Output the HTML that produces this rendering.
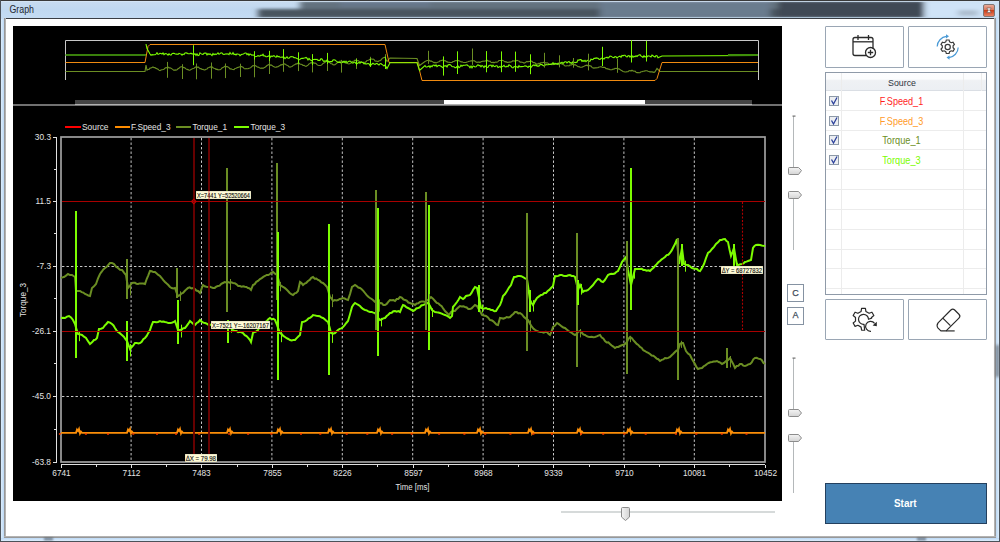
<!DOCTYPE html>
<html><head><meta charset="utf-8">
<style>
html,body{margin:0;padding:0;}
body{width:1000px;height:542px;position:relative;overflow:hidden;background:#fff;font-family:"Liberation Sans",sans-serif;}
.abs{position:absolute;}
#frame{left:0;top:0;width:1000px;height:542px;background:#bcd6f0;}
#title{left:0;top:0;width:1000px;height:19px;overflow:hidden;}
#client{left:6px;top:19px;width:988px;height:517px;background:#fff;}
.btn{position:absolute;box-sizing:border-box;border:1px solid #9aa6b4;border-radius:1px;background:#fff;}
.cb{position:absolute;left:829px;width:10px;height:10px;box-sizing:border-box;border:1px solid #8d99a8;background:linear-gradient(#e6e9ee,#f6f7f9);}
.row{position:absolute;left:842px;width:121px;text-align:center;font-size:10px;}
</style></head><body>
<div id="frame" class="abs"></div>
<div id="title" class="abs">
  <svg width="1000" height="19" style="position:absolute;left:0;top:0">
    <defs>
      <filter id="bl" x="-10%" y="-50%" width="120%" height="200%"><feGaussianBlur stdDeviation="3 1.5"/></filter>
      <linearGradient id="tg" x1="0" y1="0" x2="0" y2="1">
        <stop offset="0" stop-color="#c9dcf0"/><stop offset="0.5" stop-color="#c0d8f0"/><stop offset="1" stop-color="#c4dcf4"/>
      </linearGradient>
    </defs>
    <rect x="0" y="0" width="1000" height="19" fill="url(#tg)"/>
    <g filter="url(#bl)">
      <rect x="300" y="1" width="480" height="9" fill="#63727f"/>
      <rect x="258" y="9" width="520" height="9" fill="#49545f"/>
      <rect x="600" y="1" width="170" height="16" fill="#6a7b8e"/>
      <rect x="778" y="1" width="146" height="17" fill="#3f4954"/>
      <rect x="340" y="1" width="90" height="6" fill="#66778a"/>
      <rect x="925" y="1" width="75" height="17" fill="#cfe3f7"/>
      <rect x="958" y="10" width="20" height="6" fill="#aebfd0"/>
    </g>
    <rect x="0" y="0" width="1000" height="1" fill="#3a3a3a"/>
    <rect x="1" y="1" width="998" height="1" fill="#d6e6f6" opacity="0.8"/>
    <rect x="0" y="17" width="1000" height="1" fill="#c6dcf0" opacity="0.7"/>
    <rect x="4" y="18" width="992" height="1" fill="#3a3e44"/>
    <rect x="0" y="0" width="1" height="19" fill="#4c5259"/>
    <rect x="999" y="0" width="1" height="19" fill="#4c5259"/>
    <text x="9.5" y="12.8" font-family="Liberation Sans" font-size="10" fill="#1e2630" textLength="24.5" lengthAdjust="spacingAndGlyphs">Graph</text>
    <!-- close button -->
    <defs><linearGradient id="cg" x1="0" y1="0" x2="0" y2="1">
      <stop offset="0" stop-color="#eab0a0"/><stop offset="0.45" stop-color="#d9775c"/><stop offset="0.5" stop-color="#c8401c"/><stop offset="1" stop-color="#ec8466"/></linearGradient></defs>
    <rect x="983.5" y="4.5" width="11" height="12" rx="1.5" fill="url(#cg)" stroke="#7f7776"/>
    <path d="M986.8,8 L991.2,8 L989.6,10.2 L991.2,12.5 L986.8,12.5 L988.4,10.2 Z" fill="#f4f0f0" stroke="#5a4a48" stroke-width="0.5"/>
  </svg>
</div>
<!-- window frame sides -->
<div class="abs" style="left:0;top:19px;width:1px;height:523px;background:#4c5259"></div>
<div class="abs" style="left:1px;top:19px;width:3px;height:520px;background:linear-gradient(90deg,#dcedfc,#bcd8f4)"></div>
<div class="abs" style="left:4px;top:18px;width:2px;height:520px;background:linear-gradient(90deg,#8a8a8a,#c0c0c0)"></div>
<div class="abs" style="left:999px;top:19px;width:1px;height:523px;background:#4c5259"></div>
<div class="abs" style="left:996px;top:19px;width:3px;height:520px;background:linear-gradient(90deg,#bcd8f4,#dcedfc)"></div>
<div class="abs" style="left:994px;top:18px;width:2px;height:520px;background:linear-gradient(90deg,#c0c0c0,#8a8a8a)"></div>
<div class="abs" style="left:0;top:541px;width:1000px;height:1px;background:#4c5259"></div>
<div class="abs" style="left:1px;top:538px;width:998px;height:3px;background:linear-gradient(#bcd8f4,#dcedfc)"></div>
<div class="abs" style="left:4px;top:536px;width:992px;height:2px;background:linear-gradient(#c0c0c0,#8a8a8a)"></div>
<div id="client" class="abs"></div>
<div class="abs" style="left:996px;top:345px;width:3px;height:32px;background:#555c66;filter:blur(1.5px);opacity:0.8"></div>
<div class="abs" style="left:44px;top:538px;width:9px;height:2px;background:#3a4450;filter:blur(1px);opacity:0.8"></div>
<div class="abs" style="left:917px;top:538px;width:9px;height:2px;background:#3a4450;filter:blur(1px);opacity:0.8"></div>

<!-- chart panel -->
<svg class="abs" style="left:0;top:0" width="1000" height="542" font-family="Liberation Sans">
  <rect x="13" y="26" width="769" height="475" fill="#000"/>
  <!-- mini chart -->
  <path d="M65.5,80 V40.5 H758.5 V80" fill="none" stroke="#c8c8c8" stroke-width="1"/>
  <polyline points="65.5,71.5 145,71.5 146,65.0 147.0,70.1 148.0,69.5 149.0,69.4 150.0,68.1 151.0,68.0 152.0,67.5 153.0,67.0 154.0,67.6 155.0,67.5 156.0,68.4 157.0,68.7 158.0,69.3 159.0,70.1 160.0,70.7 161.0,69.9 162.0,69.7 163.0,69.5 164.0,69.2 165.0,68.2 166.0,67.5 167.0,67.8 168.0,66.9 169.0,67.9 170.0,67.8 171.0,68.3 172.0,68.9 173.0,69.6 174.0,70.4 175.0,69.9 176.0,70.1 177.0,69.7 178.0,68.8 179.0,68.3 180.0,67.2 181.0,66.8 182.0,66.8 183.0,67.4 184.0,67.6 185.0,68.0 186.0,68.9 187.0,69.4 188.0,69.6 189.0,70.3 190.0,70.2 191.0,69.4 192.0,69.1 193.0,68.4 194.0,68.2 195.0,67.5 196.0,66.8 197.0,67.5 198.0,66.9 199.0,67.7 200.0,68.6 201.0,68.6 202.0,69.5 203.0,69.4 204.0,70.0 205.0,69.9 206.0,69.3 207.0,69.0 208.0,67.8 209.0,67.6 210.0,67.1 211.0,66.9 212.0,66.9 213.0,67.7 214.0,68.3 215.0,68.5 216.0,69.3 217.0,69.1 218.0,69.9 219.0,69.8 220.0,69.8 221.0,69.1 222.0,67.9 223.0,67.4 224.0,67.1 225.0,66.2 226.0,66.6 227.0,66.6 228.0,67.0 229.0,67.6 230.0,68.9 231.0,68.8 232.0,69.3 233.0,69.5 234.0,69.7 235.0,68.5 236.0,68.2 237.0,67.7 238.0,67.4 239.0,67.0 240.0,66.9 241.0,66.4 242.0,66.8 243.0,67.3 244.0,68.4 245.0,69.0 246.0,68.6 247.0,68.8 248.0,68.7 249.0,68.3 250.0,68.0 251.0,67.4 252.0,66.4 253.0,65.6 254.0,65.7 255.0,65.6 256.0,66.0 257.0,66.8 258.0,67.1 259.0,67.5 260.0,68.1 261.0,68.5 262.0,67.9 263.0,68.4 264.0,67.8 265.0,67.3 266.0,66.5 267.0,65.5 268.0,65.0 269.0,64.5 270.0,65.1 271.0,64.9 272.0,65.4 273.0,66.2 274.0,66.7 275.0,67.2 276.0,67.1 277.0,66.9 278.0,66.7 279.0,66.0 280.0,65.6 281.0,64.6 282.0,64.9 283.0,64.3 284.0,63.8 285.0,64.1 286.0,64.7 287.0,65.2 288.0,65.6 289.0,66.8 290.0,67.2 291.0,66.7 292.0,66.5 293.0,65.6 294.0,64.9 295.0,64.5 296.0,63.8 297.0,63.9 298.0,63.0 299.0,63.0 300.0,64.2 301.0,64.3 302.0,64.5 303.0,65.5 304.0,65.3 305.0,66.0 306.0,66.3 307.0,65.8 308.0,65.1 309.0,63.9 310.0,63.4 311.0,62.6 312.0,62.9 313.0,62.6 314.0,63.1 315.0,63.1 316.0,63.5 317.0,64.7 318.0,65.3 319.0,65.5 320.0,65.5 321.0,65.2 322.0,64.6 323.0,63.5 324.0,63.1 325.0,62.3 326.0,61.5 327.0,61.3 328.0,61.7 329.0,62.0 330.0,62.9 331.0,63.8 332.0,63.8 333.0,64.7 334.0,64.9 335.0,64.7 336.0,63.8 337.0,63.0 338.0,62.3 339.0,61.6 340.0,61.1 341.0,61.2 342.0,61.4 343.0,61.6 344.0,61.6 345.0,62.4 346.0,63.1 347.0,62.9 348.0,63.7 349.0,64.0 350.0,63.6 351.0,63.1 352.0,62.2 353.0,61.2 354.0,61.1 355.0,60.2 356.0,60.5 357.0,60.8 358.0,60.5 359.0,61.1 360.0,62.2 361.0,62.5 362.0,62.3 363.0,62.3 364.0,62.2 365.0,62.5 366.0,61.8 367.0,60.4 368.0,60.3 369.0,59.9 370.0,59.2 371.0,58.8 372.0,59.2 373.0,59.1 374.0,59.5 375.0,61.0 376.0,61.1 377.0,61.2 378.0,61.6 379.0,60.8 380.0,60.7 381.0,60.0 382.0,58.6 383.0,58.0 384.0,57.5 385.0,57.2 387,61.5 390,58.0 417,58.5 419.5,65.5 425,61.5 426.0,61.1 427.0,60.5 428.0,60.4 429.0,60.2 430.0,61.1 431.0,60.9 432.0,61.4 433.0,62.0 434.0,62.6 435.0,62.4 436.0,62.9 437.0,62.4 438.0,62.1 439.0,61.7 440.0,60.8 441.0,60.8 442.0,60.3 443.0,60.0 444.0,60.9 445.0,60.5 446.0,61.2 447.0,61.9 448.0,62.1 449.0,62.2 450.0,62.5 451.0,62.5 452.0,62.5 453.0,61.5 454.0,61.5 455.0,60.8 456.0,60.5 457.0,60.8 458.0,60.5 459.0,60.8 460.0,61.3 461.0,61.9 462.0,61.8 463.0,62.3 464.0,62.5 465.0,62.5 466.0,62.5 467.0,62.0 468.0,61.7 469.0,61.2 470.0,61.3 471.0,60.8 472.0,60.9 473.0,61.0 474.0,60.6 475.0,61.3 476.0,62.1 477.0,62.4 478.0,62.0 479.0,62.1 480.0,62.4 481.0,61.8 482.0,61.6 483.0,61.0 484.0,61.2 485.0,61.0 486.0,60.9 487.0,60.2 488.0,60.9 489.0,61.2 490.0,61.1 491.0,62.3 492.0,62.7 493.0,62.2 494.0,62.9 495.0,62.3 496.0,62.0 497.0,62.2 498.0,61.6 499.0,60.5 500.0,60.5 501.0,60.5 502.0,60.4 503.0,60.5 504.0,61.1 505.0,61.9 506.0,61.6 507.0,62.4 508.0,62.4 509.0,62.0 510.0,62.1 511.0,62.0 512.0,61.5 513.0,60.6 514.0,61.2 515.0,60.8 516.0,61.0 517.0,60.3 518.0,60.8 519.0,61.0 520.0,62.1 521.0,62.1 522.0,62.2 523.0,62.6 524.0,63.1 525.0,62.8 526.0,61.9 527.0,61.4 528.0,61.9 529.0,61.3 530.0,61.5 531.0,61.0 532.0,61.3 533.0,62.4 534.0,62.6 535.0,62.8 536.0,64.0 537.0,63.9 538.0,64.1 539.0,63.2 540.0,63.7 541.0,62.6 542.0,63.0 543.0,62.4 544.0,62.2 545.0,62.5 546.0,63.1 547.0,62.8 548.0,63.2 549.0,64.1 550.0,64.2 551.0,64.4 552.0,64.6 553.0,64.4 554.0,64.3 555.0,64.1 556.0,63.7 557.0,63.9 558.0,63.2 559.0,63.4 560.0,63.3 561.0,63.8 562.0,63.9 563.0,64.6 564.0,64.9 565.0,66.0 566.0,66.0 567.0,65.7 568.0,65.8 569.0,66.0 570.0,64.8 571.0,65.2 572.0,64.5 573.0,64.5 574.0,64.9 575.0,64.7 576.0,65.2 577.0,65.9 578.0,66.7 579.0,66.5 580.0,67.3 581.0,67.3 582.0,67.1 583.0,66.7 584.0,66.3 585.0,65.7 586.0,65.4 587.0,65.2 588.0,65.8 589.0,65.5 590.0,65.8 591.0,66.1 592.0,67.4 593.0,67.9 594.0,68.1 595.0,67.9 596.0,67.9 597.0,67.8 598.0,67.7 599.0,67.0 600.0,67.0 601.0,66.6 602.0,67.3 603.0,67.4 604.0,67.3 605.0,67.4 606.0,68.7 607.0,68.6 608.0,69.1 609.0,69.1 610.0,69.7 611.0,69.8 612.0,69.7 613.0,69.1 614.0,69.1 615.0,68.4 616.0,68.5 617.0,68.4 618.0,68.9 619.0,68.9 620.0,69.4 621.0,70.3 622.0,70.7 623.0,71.5 624.0,71.7 625.0,72.0 626.0,71.9 627.0,71.7 628.0,71.6 629.0,70.8 630.0,70.5 631.0,71.0 632.0,70.2 633.0,70.9 634.0,71.2 635.0,71.0 636.0,72.2 637.0,72.6 638.0,72.6 639.0,72.7 640.0,72.7 641.0,71.7 642.0,71.7 643.0,71.2 644.0,71.2 645.0,70.9 646.0,70.8 647.0,70.7 648.0,71.2 649.0,71.4 650.0,71.9 651.0,71.8 652.0,71.9 653.0,72.1 654.0,72.3 655.0,71.8 657,68.5 660,71.5 758,71.5" fill="none" stroke="#6b8e23" stroke-width="1.1"/><polyline points="65.5,62.5 145,62.5 148,46.5 150,44.5 385,44.5 389,62.5 417.5,62.5 422,80.5 655,80.5 657,78.5 662,62.5 758,62.5" fill="none" stroke="#f08a10" stroke-width="1"/><line x1="65.5" y1="55" x2="146" y2="55" stroke="#3a800c" stroke-width="2"/><polyline points="146,44.0 147,48.5 150,54.0 151.0,55.2 152.0,54.7 153.0,54.9 154.0,54.8 155.0,54.7 156.0,54.1 157.0,52.7 158.0,54.3 159.0,54.0 160.0,53.4 161.0,53.5 162.0,54.0 163.0,52.9 164.0,54.6 165.0,53.8 166.0,53.6 167.0,54.1 168.0,55.1 169.0,53.8 170.0,54.7 171.0,55.0 172.0,53.7 173.0,53.3 174.0,53.4 175.0,53.8 176.0,54.1 177.0,54.0 178.0,54.3 179.0,53.3 180.0,53.7 181.0,54.0 182.0,55.1 183.0,54.1 184.0,54.5 185.0,53.0 186.0,52.9 187.0,53.1 188.0,53.8 189.0,53.8 190.0,53.8 191.0,53.2 192.0,53.9 193.0,54.0 194.0,54.3 195.0,53.7 196.0,55.5 197.0,53.9 198.0,55.5 199.0,55.2 200.0,52.9 201.0,53.6 202.0,54.2 203.0,54.4 204.0,53.3 205.0,53.0 206.0,53.1 207.0,54.9 208.0,53.6 209.0,54.6 210.0,53.8 211.0,54.6 212.0,55.5 213.0,53.5 214.0,54.8 215.0,53.9 216.0,54.5 217.0,53.9 218.0,52.8 219.0,54.3 220.0,53.6 221.0,52.8 222.0,53.0 223.0,54.3 224.0,54.4 225.0,54.2 226.0,53.8 227.0,54.1 228.0,53.8 229.0,54.7 230.0,52.6 231.0,54.1 232.0,54.2 233.0,52.6 234.0,54.5 235.0,54.2 236.0,54.9 237.0,53.8 238.0,54.2 239.0,54.3 240.0,55.7 241.0,54.8 242.0,54.2 243.0,54.2 244.0,53.6 245.0,53.0 246.0,53.0 247.0,54.7 248.0,53.6 249.0,55.3 250.0,54.0 251.0,54.4 252.0,55.3 253.0,54.8 254.0,55.4 255.0,56.7 256.0,56.5 257.0,56.2 258.0,55.6 259.0,56.1 260.0,56.0 261.0,55.1 262.0,55.6 263.0,54.3 264.0,56.1 265.0,55.8 266.0,56.8 267.0,56.8 268.0,56.2 269.0,55.8 270.0,57.7 271.0,55.9 272.0,56.5 273.0,56.0 274.0,55.7 275.0,56.6 276.0,57.2 277.0,55.7 278.0,56.8 279.0,56.4 280.0,57.3 281.0,57.2 282.0,57.0 283.0,57.1 284.0,57.3 285.0,58.7 286.0,57.7 287.0,56.9 288.0,58.3 289.0,58.3 290.0,57.1 291.0,56.5 292.0,56.8 293.0,56.8 294.0,57.7 295.0,57.5 296.0,58.1 297.0,58.4 298.0,59.1 299.0,59.8 300.0,59.4 301.0,58.5 302.0,58.4 303.0,58.4 304.0,58.0 305.0,58.0 306.0,57.5 307.0,58.2 308.0,60.0 309.0,58.5 310.0,59.7 311.0,60.2 312.0,60.9 313.0,59.5 314.0,59.5 315.0,59.4 316.0,59.5 317.0,59.4 318.0,60.4 319.0,60.2 320.0,60.3 321.0,58.6 322.0,58.9 323.0,60.7 324.0,61.5 325.0,60.8 326.0,61.3 327.0,60.1 328.0,61.0 329.0,62.0 330.0,61.6 331.0,61.5 332.0,61.6 333.0,60.0 334.0,59.7 335.0,59.9 336.0,60.9 337.0,61.6 338.0,62.5 339.0,62.3 340.0,62.4 341.0,62.8 342.0,62.2 343.0,62.4 344.0,61.1 345.0,62.6 346.0,61.2 347.0,62.6 348.0,61.9 349.0,61.3 350.0,61.0 351.0,61.6 352.0,62.8 353.0,63.2 354.0,62.2 355.0,62.3 356.0,63.5 357.0,63.6 358.0,63.0 359.0,62.5 360.0,63.2 361.0,61.7 362.0,62.3 363.0,62.6 364.0,63.9 365.0,63.4 366.0,64.2 367.0,63.7 368.0,63.5 369.0,63.7 370.0,65.5 371.0,65.0 372.0,64.0 373.0,63.3 374.0,64.1 375.0,64.3 376.0,63.7 377.0,63.3 378.0,64.3 379.0,65.0 380.0,63.7 381.0,63.6 382.0,64.6 383.0,65.1 384.0,65.9 385.0,64.9 387,68.5 390,62.8 417,62.8 419.5,70.5 425,65.5 426.0,67.0 427.0,67.0 428.0,66.6 429.0,65.9 430.0,67.5 431.0,65.8 432.0,66.7 433.0,65.2 434.0,65.0 435.0,66.0 436.0,65.0 437.0,66.6 438.0,65.8 439.0,65.3 440.0,65.7 441.0,66.3 442.0,67.0 443.0,67.7 444.0,65.8 445.0,66.2 446.0,65.6 447.0,67.0 448.0,64.9 449.0,64.6 450.0,64.6 451.0,65.3 452.0,66.6 453.0,66.8 454.0,66.7 455.0,67.6 456.0,67.6 457.0,66.4 458.0,66.0 459.0,67.6 460.0,66.9 461.0,65.1 462.0,66.3 463.0,65.4 464.0,65.3 465.0,65.2 466.0,65.0 467.0,64.8 468.0,65.7 469.0,66.1 470.0,67.7 471.0,66.0 472.0,67.8 473.0,66.1 474.0,66.3 475.0,67.0 476.0,66.8 477.0,65.7 478.0,64.7 479.0,65.6 480.0,65.4 481.0,66.8 482.0,65.4 483.0,66.1 484.0,67.5 485.0,65.8 486.0,66.7 487.0,67.5 488.0,67.3 489.0,65.5 490.0,65.3 491.0,65.1 492.0,66.8 493.0,65.2 494.0,66.3 495.0,66.7 496.0,65.7 497.0,65.8 498.0,67.6 499.0,67.0 500.0,66.4 501.0,67.4 502.0,66.5 503.0,66.2 504.0,65.4 505.0,66.8 506.0,66.9 507.0,66.1 508.0,66.8 509.0,64.8 510.0,65.4 511.0,66.2 512.0,67.5 513.0,67.8 514.0,66.7 515.0,66.5 516.0,66.8 517.0,66.9 518.0,67.6 519.0,65.7 520.0,66.8 521.0,66.5 522.0,66.6 523.0,66.5 524.0,66.2 525.0,65.8 526.0,66.1 527.0,66.4 528.0,67.5 529.0,66.1 530.0,66.4 531.0,67.5 532.0,66.1 533.0,65.3 534.0,64.9 535.0,65.7 536.0,64.9 537.0,66.2 538.0,65.9 539.0,66.2 540.0,64.7 541.0,64.5 542.0,64.6 543.0,65.6 544.0,66.0 545.0,65.3 546.0,64.6 547.0,64.7 548.0,64.7 549.0,64.5 550.0,64.4 551.0,64.4 552.0,63.8 553.0,62.6 554.0,64.3 555.0,63.3 556.0,64.0 557.0,63.7 558.0,64.5 559.0,63.2 560.0,63.1 561.0,62.9 562.0,62.3 563.0,63.5 564.0,62.5 565.0,61.7 566.0,61.7 567.0,62.9 568.0,61.9 569.0,61.4 570.0,62.9 571.0,62.6 572.0,63.5 573.0,61.5 574.0,62.1 575.0,62.7 576.0,62.4 577.0,62.2 578.0,59.9 579.0,60.2 580.0,59.5 581.0,59.6 582.0,61.3 583.0,60.5 584.0,61.4 585.0,60.4 586.0,61.6 587.0,60.7 588.0,60.2 589.0,61.1 590.0,61.2 591.0,59.0 592.0,59.7 593.0,59.4 594.0,58.3 595.0,58.4 596.0,57.9 597.0,58.1 598.0,58.3 599.0,59.2 600.0,59.4 601.0,58.5 602.0,58.1 603.0,58.6 604.0,59.1 605.0,57.7 606.0,57.7 607.0,57.1 608.0,58.1 609.0,57.3 610.0,56.1 611.0,56.2 612.0,56.9 613.0,57.4 614.0,57.7 615.0,56.6 616.0,56.8 617.0,57.9 618.0,57.1 619.0,56.5 620.0,56.2 621.0,57.3 622.0,55.5 623.0,55.8 624.0,55.2 625.0,55.3 626.0,56.4 627.0,57.0 628.0,55.8 629.0,55.7 630.0,57.1 631.0,56.0 632.0,55.6 633.0,57.4 634.0,56.2 635.0,56.8 636.0,55.7 637.0,56.5 638.0,55.5 639.0,54.9 640.0,54.7 641.0,56.1 642.0,56.5 643.0,57.4 644.0,55.8 645.0,57.1 646.0,56.6 647.0,56.9 648.0,55.9 649.0,56.0 650.0,56.3 651.0,56.9 652.0,55.0 653.0,55.8 654.0,56.6 655.0,57.1 656.0,55.6 657.0,55.8 658.0,57.8 662,56.0 758,55.5" fill="none" stroke="#7cfc00" stroke-width="1.1"/><line x1="728" y1="55" x2="758" y2="55" stroke="#3f8f0a" stroke-width="2"/><line x1="167.5" y1="61.9" x2="167.5" y2="77.8" stroke="#6b8e23" stroke-width="1"/><line x1="182.5" y1="64.2" x2="182.5" y2="79.0" stroke="#6b8e23" stroke-width="1"/><line x1="196.5" y1="63.5" x2="196.5" y2="79.3" stroke="#6b8e23" stroke-width="1"/><line x1="193.5" y1="45.2" x2="193.5" y2="65.2" stroke="#7cfc00" stroke-width="1"/><line x1="211.5" y1="62.5" x2="211.5" y2="78.7" stroke="#6b8e23" stroke-width="1"/><line x1="225.5" y1="63.5" x2="225.5" y2="78.1" stroke="#6b8e23" stroke-width="1"/><line x1="240.5" y1="63.7" x2="240.5" y2="77.0" stroke="#6b8e23" stroke-width="1"/><line x1="254.5" y1="52.2" x2="254.5" y2="77.3" stroke="#6b8e23" stroke-width="1"/><line x1="254.5" y1="51.2" x2="254.5" y2="59.5" stroke="#7cfc00" stroke-width="1"/><line x1="269.5" y1="53.2" x2="269.5" y2="74.0" stroke="#6b8e23" stroke-width="1"/><line x1="269.5" y1="50.8" x2="269.5" y2="60.9" stroke="#7cfc00" stroke-width="1"/><line x1="283.5" y1="53.1" x2="283.5" y2="71.8" stroke="#6b8e23" stroke-width="1"/><line x1="283.5" y1="49.1" x2="283.5" y2="58.9" stroke="#7cfc00" stroke-width="1"/><line x1="298.5" y1="55.3" x2="298.5" y2="71.1" stroke="#6b8e23" stroke-width="1"/><line x1="298.5" y1="52.3" x2="298.5" y2="63.8" stroke="#7cfc00" stroke-width="1"/><line x1="312.5" y1="58.4" x2="312.5" y2="72.4" stroke="#6b8e23" stroke-width="1"/><line x1="312.5" y1="54.1" x2="312.5" y2="65.0" stroke="#7cfc00" stroke-width="1"/><line x1="327.5" y1="57.8" x2="327.5" y2="71.0" stroke="#6b8e23" stroke-width="1"/><line x1="327.5" y1="52.9" x2="327.5" y2="64.0" stroke="#7cfc00" stroke-width="1"/><line x1="341.5" y1="59.9" x2="341.5" y2="72.6" stroke="#6b8e23" stroke-width="1"/><line x1="356.5" y1="58.2" x2="356.5" y2="68.9" stroke="#6b8e23" stroke-width="1"/><line x1="356.5" y1="59.3" x2="356.5" y2="65.6" stroke="#7cfc00" stroke-width="1"/><line x1="370.5" y1="56.8" x2="370.5" y2="66.9" stroke="#6b8e23" stroke-width="1"/><line x1="370.5" y1="58.7" x2="370.5" y2="66.9" stroke="#7cfc00" stroke-width="1"/><line x1="385.5" y1="54.2" x2="385.5" y2="65.2" stroke="#6b8e23" stroke-width="1"/><line x1="385.5" y1="56.8" x2="385.5" y2="69.0" stroke="#7cfc00" stroke-width="1"/><line x1="428.5" y1="50.8" x2="428.5" y2="63.9" stroke="#6b8e23" stroke-width="1"/><line x1="443.5" y1="56.4" x2="443.5" y2="75.6" stroke="#7cfc00" stroke-width="1"/><line x1="457.5" y1="51.3" x2="457.5" y2="74.0" stroke="#7cfc00" stroke-width="1"/><line x1="472.5" y1="48.5" x2="472.5" y2="64.9" stroke="#6b8e23" stroke-width="1"/><line x1="486.5" y1="51.1" x2="486.5" y2="72.3" stroke="#7cfc00" stroke-width="1"/><line x1="501.5" y1="51.4" x2="501.5" y2="72.2" stroke="#7cfc00" stroke-width="1"/><line x1="515.5" y1="51.6" x2="515.5" y2="71.8" stroke="#7cfc00" stroke-width="1"/><line x1="530.5" y1="54.3" x2="530.5" y2="74.2" stroke="#7cfc00" stroke-width="1"/><line x1="544.5" y1="52.8" x2="544.5" y2="67.6" stroke="#6b8e23" stroke-width="1"/><line x1="559.5" y1="55.3" x2="559.5" y2="67.4" stroke="#6b8e23" stroke-width="1"/><line x1="573.5" y1="58.0" x2="573.5" y2="67.7" stroke="#6b8e23" stroke-width="1"/><line x1="588.5" y1="53.7" x2="588.5" y2="70.4" stroke="#6b8e23" stroke-width="1"/><line x1="602.5" y1="46.8" x2="602.5" y2="66.0" stroke="#7cfc00" stroke-width="1"/><line x1="617.5" y1="58.7" x2="617.5" y2="72.8" stroke="#6b8e23" stroke-width="1"/><line x1="631.5" y1="40.1" x2="631.5" y2="62.5" stroke="#7cfc00" stroke-width="1"/><line x1="646.5" y1="40.8" x2="646.5" y2="61.5" stroke="#7cfc00" stroke-width="1"/>
  <rect x="75" y="100" width="677" height="4" fill="#444"/>
  <rect x="444" y="100" width="201" height="4" fill="#fff"/>
  <rect x="13" y="104" width="769" height="2" fill="#707070"/>
  <rect x="75" y="104" width="677" height="1" fill="#b0b0b0"/>
  <!-- legend -->
  <g font-size="9.5" fill="#e4e4e4">
    <rect x="65" y="126" width="16" height="2" fill="#ff0000"/>
    <text x="82" y="129.8" textLength="26.5" lengthAdjust="spacingAndGlyphs">Source</text>
    <rect x="115" y="126" width="15" height="2" fill="#ff8c00"/>
    <text x="131" y="129.8" textLength="39.5" lengthAdjust="spacingAndGlyphs">F.Speed_3</text>
    <rect x="176" y="126" width="15" height="2" fill="#6b8e23"/>
    <text x="192.5" y="129.8" textLength="34.5" lengthAdjust="spacingAndGlyphs">Torque_1</text>
    <rect x="234" y="126" width="15" height="2" fill="#7cfc00"/>
    <text x="250.5" y="129.8" textLength="34.5" lengthAdjust="spacingAndGlyphs">Torque_3</text>
  </g>
  <!-- grid -->
  <line x1="131.1" y1="138" x2="131.1" y2="461" stroke="#c8c8c8" stroke-width="1" stroke-dasharray="2.4,2.1"/><line x1="201.5" y1="138" x2="201.5" y2="461" stroke="#c8c8c8" stroke-width="1" stroke-dasharray="2.4,2.1"/><line x1="271.9" y1="138" x2="271.9" y2="461" stroke="#c8c8c8" stroke-width="1" stroke-dasharray="2.4,2.1"/><line x1="342.3" y1="138" x2="342.3" y2="461" stroke="#c8c8c8" stroke-width="1" stroke-dasharray="2.4,2.1"/><line x1="412.7" y1="138" x2="412.7" y2="461" stroke="#c8c8c8" stroke-width="1" stroke-dasharray="2.4,2.1"/><line x1="483.1" y1="138" x2="483.1" y2="461" stroke="#c8c8c8" stroke-width="1" stroke-dasharray="2.4,2.1"/><line x1="553.5" y1="138" x2="553.5" y2="461" stroke="#c8c8c8" stroke-width="1" stroke-dasharray="2.4,2.1"/><line x1="623.9" y1="138" x2="623.9" y2="461" stroke="#c8c8c8" stroke-width="1" stroke-dasharray="2.4,2.1"/><line x1="694.3" y1="138" x2="694.3" y2="461" stroke="#c8c8c8" stroke-width="1" stroke-dasharray="2.4,2.1"/><line x1="62" y1="201.5" x2="764" y2="201.5" stroke="#c8c8c8" stroke-width="1" stroke-dasharray="2.4,2.1"/><line x1="62" y1="266.5" x2="764" y2="266.5" stroke="#c8c8c8" stroke-width="1" stroke-dasharray="2.4,2.1"/><line x1="62" y1="331.5" x2="764" y2="331.5" stroke="#c8c8c8" stroke-width="1" stroke-dasharray="2.4,2.1"/><line x1="62" y1="396.5" x2="764" y2="396.5" stroke="#c8c8c8" stroke-width="1" stroke-dasharray="2.4,2.1"/>
  <!-- axes -->
  <g font-size="8.3" fill="#e4e4e4">
  <line x1="56.5" y1="137" x2="56.5" y2="463" stroke="#e0e0e0"/>
  <line x1="61" y1="464.5" x2="765" y2="464.5" stroke="#e0e0e0"/>
  <line x1="53" y1="137.5" x2="56" y2="137.5" stroke="#e0e0e0"/><text x="51" y="140" text-anchor="end">30.3</text><line x1="53" y1="201.5" x2="56" y2="201.5" stroke="#e0e0e0"/><text x="51" y="204" text-anchor="end">11.5</text><line x1="53" y1="266.5" x2="56" y2="266.5" stroke="#e0e0e0"/><text x="51" y="269" text-anchor="end">-7.3</text><line x1="53" y1="331.5" x2="56" y2="331.5" stroke="#e0e0e0"/><text x="51" y="334" text-anchor="end">-26.1</text><line x1="53" y1="396.5" x2="56" y2="396.5" stroke="#e0e0e0"/><text x="51" y="399" text-anchor="end">-45.0</text><line x1="53" y1="462.5" x2="56" y2="462.5" stroke="#e0e0e0"/><text x="51" y="465" text-anchor="end">-63.8</text><line x1="54" y1="169.5" x2="56" y2="169.5" stroke="#e0e0e0"/><line x1="54" y1="233.5" x2="56" y2="233.5" stroke="#e0e0e0"/><line x1="54" y1="298.5" x2="56" y2="298.5" stroke="#e0e0e0"/><line x1="54" y1="363.5" x2="56" y2="363.5" stroke="#e0e0e0"/><line x1="54" y1="429.5" x2="56" y2="429.5" stroke="#e0e0e0"/><line x1="61.5" y1="465" x2="61.5" y2="468" stroke="#e0e0e0"/><text x="61.5" y="476" text-anchor="middle">6741</text><line x1="96.5" y1="465" x2="96.5" y2="467" stroke="#e0e0e0"/><line x1="131.5" y1="465" x2="131.5" y2="468" stroke="#e0e0e0"/><text x="131.5" y="476" text-anchor="middle">7112</text><line x1="166.5" y1="465" x2="166.5" y2="467" stroke="#e0e0e0"/><line x1="201.5" y1="465" x2="201.5" y2="468" stroke="#e0e0e0"/><text x="201.5" y="476" text-anchor="middle">7483</text><line x1="237.5" y1="465" x2="237.5" y2="467" stroke="#e0e0e0"/><line x1="272.5" y1="465" x2="272.5" y2="468" stroke="#e0e0e0"/><text x="272.5" y="476" text-anchor="middle">7855</text><line x1="307.5" y1="465" x2="307.5" y2="467" stroke="#e0e0e0"/><line x1="342.5" y1="465" x2="342.5" y2="468" stroke="#e0e0e0"/><text x="342.5" y="476" text-anchor="middle">8226</text><line x1="377.5" y1="465" x2="377.5" y2="467" stroke="#e0e0e0"/><line x1="413.5" y1="465" x2="413.5" y2="468" stroke="#e0e0e0"/><text x="413.5" y="476" text-anchor="middle">8597</text><line x1="448.5" y1="465" x2="448.5" y2="467" stroke="#e0e0e0"/><line x1="483.5" y1="465" x2="483.5" y2="468" stroke="#e0e0e0"/><text x="483.5" y="476" text-anchor="middle">8968</text><line x1="518.5" y1="465" x2="518.5" y2="467" stroke="#e0e0e0"/><line x1="553.5" y1="465" x2="553.5" y2="468" stroke="#e0e0e0"/><text x="553.5" y="476" text-anchor="middle">9339</text><line x1="589.5" y1="465" x2="589.5" y2="467" stroke="#e0e0e0"/><line x1="624.5" y1="465" x2="624.5" y2="468" stroke="#e0e0e0"/><text x="624.5" y="476" text-anchor="middle">9710</text><line x1="659.5" y1="465" x2="659.5" y2="467" stroke="#e0e0e0"/><line x1="694.5" y1="465" x2="694.5" y2="468" stroke="#e0e0e0"/><text x="694.5" y="476" text-anchor="middle">10081</text><line x1="729.5" y1="465" x2="729.5" y2="467" stroke="#e0e0e0"/><line x1="765.5" y1="465" x2="765.5" y2="468" stroke="#e0e0e0"/><text x="765.5" y="476" text-anchor="middle">10452</text>
  <text x="395.5" y="490" textLength="34" lengthAdjust="spacingAndGlyphs">Time [ms]</text>
  <text transform="translate(25.8,317) rotate(-90)" font-size="9" textLength="34" lengthAdjust="spacingAndGlyphs">Torque_3</text>
  </g>
  <!-- plot frame -->
  <rect x="61" y="137" width="704" height="325" fill="none" stroke="#a0a0a0" stroke-width="1.7"/>
  <!-- series -->
  <polyline points="61,432.8 62,432.8 63,432.8 64,432.8 65,432.8 66,432.8 67,432.8 68,432.8 69,432.8 70,432.8 71,432.8 72,432.8 73,432.8 74,432.8 75,432.8 76,432.8 77,429.5 78,431 79,428.8 80,433.6 81,431.6 82,432.8 83,432.8 84,432.8 85,432.8 86,432.8 87,432.8 88,432.8 89,432.8 90,432.8 91,432.8 92,432.8 93,432.8 94,432.8 95,432.8 96,432.8 97,432.8 98,432.8 99,432.8 100,432.8 101,432.8 102,432.8 103,432.8 104,432.8 105,432.8 106,432.8 107,432.8 108,432.8 109,432.8 110,432.8 111,432.8 112,432.8 113,432.8 114,432.8 115,432.8 116,432.8 117,432.8 118,432.8 119,432.8 120,432.8 121,432.8 122,432.8 123,432.8 124,432.8 125,432.8 126,432.8 127,432.8 128,429.5 129,431 130,428.8 131,433.6 132,431.6 133,432.8 134,432.8 135,432.8 136,432.8 137,432.8 138,432.8 139,432.8 140,432.8 141,432.8 142,432.8 143,432.8 144,432.8 145,432.8 146,432.8 147,432.8 148,432.8 149,432.8 150,432.8 151,432.8 152,432.8 153,432.8 154,432.8 155,432.8 156,432.8 157,432.8 158,432.8 159,432.8 160,432.8 161,432.8 162,432.8 163,432.8 164,432.8 165,432.8 166,432.8 167,432.8 168,432.8 169,432.8 170,432.8 171,432.8 172,432.8 173,432.8 174,432.8 175,432.8 176,432.8 177,432.8 178,429.5 179,431 180,428.8 181,433.6 182,431.6 183,432.8 184,432.8 185,432.8 186,432.8 187,432.8 188,432.8 189,432.8 190,432.8 191,432.8 192,432.8 193,432.8 194,432.8 195,432.8 196,432.8 197,432.8 198,432.8 199,432.8 200,432.8 201,432.8 202,432.8 203,432.8 204,432.8 205,432.8 206,432.8 207,432.8 208,432.8 209,432.8 210,432.8 211,432.8 212,432.8 213,432.8 214,432.8 215,432.8 216,432.8 217,432.8 218,432.8 219,432.8 220,432.8 221,432.8 222,432.8 223,432.8 224,432.8 225,432.8 226,432.8 227,432.8 228,429.5 229,431 230,428.8 231,433.6 232,431.6 233,432.8 234,432.8 235,432.8 236,432.8 237,432.8 238,432.8 239,432.8 240,432.8 241,432.8 242,432.8 243,432.8 244,432.8 245,432.8 246,432.8 247,432.8 248,432.8 249,432.8 250,432.8 251,432.8 252,432.8 253,432.8 254,432.8 255,432.8 256,432.8 257,432.8 258,432.8 259,432.8 260,432.8 261,432.8 262,432.8 263,432.8 264,432.8 265,432.8 266,432.8 267,432.8 268,432.8 269,432.8 270,432.8 271,432.8 272,432.8 273,432.8 274,432.8 275,432.8 276,432.8 277,432.8 278,429.5 279,431 280,428.8 281,433.6 282,431.6 283,432.8 284,432.8 285,432.8 286,432.8 287,432.8 288,432.8 289,432.8 290,432.8 291,432.8 292,432.8 293,432.8 294,432.8 295,432.8 296,432.8 297,432.8 298,432.8 299,432.8 300,432.8 301,432.8 302,432.8 303,432.8 304,432.8 305,432.8 306,432.8 307,432.8 308,432.8 309,432.8 310,432.8 311,432.8 312,432.8 313,432.8 314,432.8 315,432.8 316,432.8 317,432.8 318,432.8 319,432.8 320,432.8 321,432.8 322,432.8 323,432.8 324,432.8 325,432.8 326,432.8 327,432.8 328,432.8 329,429.5 330,431 331,428.8 332,433.6 333,431.6 334,432.8 335,432.8 336,432.8 337,432.8 338,432.8 339,432.8 340,432.8 341,432.8 342,432.8 343,432.8 344,432.8 345,432.8 346,432.8 347,432.8 348,432.8 349,432.8 350,432.8 351,432.8 352,432.8 353,432.8 354,432.8 355,432.8 356,432.8 357,432.8 358,432.8 359,432.8 360,432.8 361,432.8 362,432.8 363,432.8 364,432.8 365,432.8 366,432.8 367,432.8 368,432.8 369,432.8 370,432.8 371,432.8 372,432.8 373,432.8 374,432.8 375,432.8 376,432.8 377,432.8 378,429.5 379,431 380,428.8 381,433.6 382,431.6 383,432.8 384,432.8 385,432.8 386,432.8 387,432.8 388,432.8 389,432.8 390,432.8 391,432.8 392,432.8 393,432.8 394,432.8 395,432.8 396,432.8 397,432.8 398,432.8 399,432.8 400,432.8 401,432.8 402,432.8 403,432.8 404,432.8 405,432.8 406,432.8 407,432.8 408,432.8 409,432.8 410,432.8 411,432.8 412,432.8 413,432.8 414,432.8 415,432.8 416,432.8 417,432.8 418,432.8 419,432.8 420,432.8 421,432.8 422,432.8 423,432.8 424,432.8 425,432.8 426,429.5 427,431 428,428.8 429,433.6 430,431.6 431,432.8 432,432.8 433,432.8 434,432.8 435,432.8 436,432.8 437,432.8 438,432.8 439,432.8 440,432.8 441,432.8 442,432.8 443,432.8 444,432.8 445,432.8 446,432.8 447,432.8 448,432.8 449,432.8 450,432.8 451,432.8 452,432.8 453,432.8 454,432.8 455,432.8 456,432.8 457,432.8 458,432.8 459,432.8 460,432.8 461,432.8 462,432.8 463,432.8 464,432.8 465,432.8 466,432.8 467,432.8 468,432.8 469,432.8 470,432.8 471,432.8 472,432.8 473,432.8 474,432.8 475,432.8 476,432.8 477,432.8 478,429.5 479,431 480,428.8 481,433.6 482,431.6 483,432.8 484,432.8 485,432.8 486,432.8 487,432.8 488,432.8 489,432.8 490,432.8 491,432.8 492,432.8 493,432.8 494,432.8 495,432.8 496,432.8 497,432.8 498,432.8 499,432.8 500,432.8 501,432.8 502,432.8 503,432.8 504,432.8 505,432.8 506,432.8 507,432.8 508,432.8 509,432.8 510,432.8 511,432.8 512,432.8 513,432.8 514,432.8 515,432.8 516,432.8 517,432.8 518,432.8 519,432.8 520,432.8 521,432.8 522,432.8 523,432.8 524,432.8 525,432.8 526,432.8 527,432.8 528,432.8 529,429.5 530,431 531,428.8 532,433.6 533,431.6 534,432.8 535,432.8 536,432.8 537,432.8 538,432.8 539,432.8 540,432.8 541,432.8 542,432.8 543,432.8 544,432.8 545,432.8 546,432.8 547,432.8 548,432.8 549,432.8 550,432.8 551,432.8 552,432.8 553,432.8 554,432.8 555,432.8 556,432.8 557,432.8 558,432.8 559,432.8 560,432.8 561,432.8 562,432.8 563,432.8 564,432.8 565,432.8 566,432.8 567,432.8 568,432.8 569,432.8 570,432.8 571,432.8 572,432.8 573,432.8 574,432.8 575,432.8 576,432.8 577,432.8 578,429.5 579,431 580,428.8 581,433.6 582,431.6 583,432.8 584,432.8 585,432.8 586,432.8 587,432.8 588,432.8 589,432.8 590,432.8 591,432.8 592,432.8 593,432.8 594,432.8 595,432.8 596,432.8 597,432.8 598,432.8 599,432.8 600,432.8 601,432.8 602,432.8 603,432.8 604,432.8 605,432.8 606,432.8 607,432.8 608,432.8 609,432.8 610,432.8 611,432.8 612,432.8 613,432.8 614,432.8 615,432.8 616,432.8 617,432.8 618,432.8 619,432.8 620,432.8 621,432.8 622,432.8 623,432.8 624,432.8 625,432.8 626,432.8 627,432.8 628,429.5 629,431 630,428.8 631,433.6 632,431.6 633,432.8 634,432.8 635,432.8 636,432.8 637,432.8 638,432.8 639,432.8 640,432.8 641,432.8 642,432.8 643,432.8 644,432.8 645,432.8 646,432.8 647,432.8 648,432.8 649,432.8 650,432.8 651,432.8 652,432.8 653,432.8 654,432.8 655,432.8 656,432.8 657,432.8 658,432.8 659,432.8 660,432.8 661,432.8 662,432.8 663,432.8 664,432.8 665,432.8 666,432.8 667,432.8 668,432.8 669,432.8 670,432.8 671,432.8 672,432.8 673,432.8 674,432.8 675,432.8 676,432.8 677,429.5 678,431 679,428.8 680,433.6 681,431.6 682,432.8 683,432.8 684,432.8 685,432.8 686,432.8 687,432.8 688,432.8 689,432.8 690,432.8 691,432.8 692,432.8 693,432.8 694,432.8 695,432.8 696,432.8 697,432.8 698,432.8 699,432.8 700,432.8 701,432.8 702,432.8 703,432.8 704,432.8 705,432.8 706,432.8 707,432.8 708,432.8 709,432.8 710,432.8 711,432.8 712,432.8 713,432.8 714,432.8 715,432.8 716,432.8 717,432.8 718,432.8 719,432.8 720,432.8 721,432.8 722,432.8 723,432.8 724,432.8 725,432.8 726,432.8 727,432.8 728,429.5 729,431 730,428.8 731,433.6 732,431.6 733,432.8 734,432.8 735,432.8 736,432.8 737,432.8 738,432.8 739,432.8 740,432.8 741,432.8 742,432.8 743,432.8 744,432.8 745,432.8 746,432.8 747,432.8 748,432.8 749,432.8 750,432.8 751,432.8 752,432.8 753,432.8 754,432.8 755,432.8 756,432.8 757,432.8 758,432.8 759,432.8 760,432.8 761,432.8 762,432.8 763,432.8 764,432.8 765,432.8" fill="none" stroke="#fb8e08" stroke-width="1.8"/>
  <rect x="58.9" y="433.2" width="2" height="1.5" fill="#ff3a00"/><rect x="84.9" y="433.2" width="2" height="1.5" fill="#ff3a00"/><rect x="107.0" y="433.2" width="2" height="1.5" fill="#ff3a00"/><rect x="132.3" y="433.2" width="2" height="1.5" fill="#ff3a00"/><rect x="156.0" y="433.2" width="2" height="1.5" fill="#ff3a00"/><rect x="175.0" y="433.2" width="2" height="1.5" fill="#ff3a00"/><rect x="198.1" y="433.2" width="2" height="1.5" fill="#ff3a00"/><rect x="228.2" y="433.2" width="2" height="1.5" fill="#ff3a00"/><rect x="247.1" y="433.2" width="2" height="1.5" fill="#ff3a00"/><rect x="270.4" y="433.2" width="2" height="1.5" fill="#ff3a00"/><rect x="300.0" y="433.2" width="2" height="1.5" fill="#ff3a00"/><rect x="319.3" y="433.2" width="2" height="1.5" fill="#ff3a00"/><rect x="345.7" y="433.2" width="2" height="1.5" fill="#ff3a00"/><rect x="366.3" y="433.2" width="2" height="1.5" fill="#ff3a00"/><rect x="391.1" y="433.2" width="2" height="1.5" fill="#ff3a00"/><rect x="410.7" y="433.2" width="2" height="1.5" fill="#ff3a00"/><rect x="438.1" y="433.2" width="2" height="1.5" fill="#ff3a00"/><rect x="463.4" y="433.2" width="2" height="1.5" fill="#ff3a00"/><rect x="484.2" y="433.2" width="2" height="1.5" fill="#ff3a00"/><rect x="509.4" y="433.2" width="2" height="1.5" fill="#ff3a00"/><rect x="532.4" y="433.2" width="2" height="1.5" fill="#ff3a00"/><rect x="551.0" y="433.2" width="2" height="1.5" fill="#ff3a00"/><rect x="580.1" y="433.2" width="2" height="1.5" fill="#ff3a00"/><rect x="602.2" y="433.2" width="2" height="1.5" fill="#ff3a00"/><rect x="623.4" y="433.2" width="2" height="1.5" fill="#ff3a00"/><rect x="644.7" y="433.2" width="2" height="1.5" fill="#ff3a00"/><rect x="674.9" y="433.2" width="2" height="1.5" fill="#ff3a00"/><rect x="695.3" y="433.2" width="2" height="1.5" fill="#ff3a00"/><rect x="720.8" y="433.2" width="2" height="1.5" fill="#ff3a00"/><rect x="745.5" y="433.2" width="2" height="1.5" fill="#ff3a00"/>
  <polyline points="61.0,278.0 62.5,277.4 64.0,277.0 66.0,275.6 68.0,274.0 70.0,275.1 72.0,275.0 73.5,276.0 75.0,277.0 76.0,291.0 78.0,291.0 80.0,291.0 81.7,292.1 83.3,292.6 85.0,294.0 86.7,294.7 88.3,295.5 90.0,296.0 92.0,288.0 94.0,286.4 96.0,284.0 98.0,278.4 100.0,274.0 101.7,271.7 103.3,269.4 105.0,268.0 106.7,266.8 108.3,264.9 110.0,263.0 112.0,262.9 114.0,264.0 116.0,266.7 118.0,268.0 120.0,269.7 122.0,270.0 124.0,272.7 126.0,275.0 128.0,288.0 130.0,285.7 132.0,283.0 133.5,282.8 135.0,282.8 136.5,283.8 138.0,284.0 139.8,283.4 141.5,283.6 143.2,283.6 145.0,284.0 146.7,279.0 148.3,275.3 150.0,271.0 151.7,271.3 153.3,272.1 155.0,272.0 156.7,273.4 158.3,274.9 160.0,276.0 161.7,278.0 163.3,280.2 165.0,282.0 166.7,283.6 168.3,285.0 170.0,287.0 171.7,288.0 173.3,288.4 175.0,288.0 176.5,292.5 178.0,296.0 179.7,295.3 181.3,293.7 183.0,293.0 184.7,291.0 186.3,289.4 188.0,288.0 189.7,287.4 191.3,288.4 193.0,288.0 194.7,288.9 196.3,290.5 198.0,291.0 200.0,293.0 201.5,288.8 203.0,285.0 204.7,286.3 206.3,286.8 208.0,287.0 209.7,286.6 211.3,287.3 213.0,288.0 214.7,287.9 216.3,286.6 218.0,286.0 219.7,285.7 221.3,283.9 223.0,283.0 224.7,282.1 226.3,282.5 228.0,282.0 229.7,282.7 231.3,282.3 233.0,283.0 234.8,283.2 236.5,284.3 238.2,285.9 240.0,286.0 241.6,286.8 243.2,286.3 244.8,286.8 246.4,287.0 248.0,288.0 249.5,288.4 251.0,290.0 253.0,285.0 254.7,284.1 256.3,281.9 258.0,281.0 260.0,279.0 261.7,278.1 263.3,276.9 265.0,276.0 266.7,274.9 268.3,275.0 270.0,274.0 271.5,272.5 273.0,272.0 275.0,273.7 277.0,275.0 278.5,279.5 280.0,285.0 281.5,285.9 283.0,287.0 284.7,287.9 286.3,289.3 288.0,291.0 289.7,293.0 291.3,294.1 293.0,295.0 294.7,293.4 296.3,292.9 298.0,291.0 300.0,282.0 301.5,283.1 303.0,285.0 304.7,283.5 306.3,282.8 308.0,281.0 309.7,279.9 311.3,277.8 313.0,277.0 314.7,278.7 316.3,278.6 318.0,280.0 319.7,280.7 321.3,282.4 323.0,283.0 325.0,284.8 327.0,287.0 328.5,291.7 330.0,297.0 331.5,298.4 333.0,301.0 334.7,300.1 336.3,300.4 338.0,300.0 339.7,299.0 341.3,298.8 343.0,298.0 344.7,298.5 346.3,299.3 348.0,300.0 350.0,294.1 352.0,287.0 353.5,286.0 355.0,285.0 356.7,286.1 358.3,287.5 360.0,288.0 361.7,289.2 363.3,290.8 365.0,293.0 366.7,295.2 368.3,296.8 370.0,298.0 371.7,299.0 373.3,300.2 375.0,302.0 376.7,302.7 378.3,303.3 380.0,303.0 381.7,303.2 383.3,305.0 385.0,305.0 386.7,303.9 388.3,301.8 390.0,300.0 391.7,300.2 393.3,300.1 395.0,301.0 396.7,299.0 398.3,299.0 400.0,297.0 401.7,297.6 403.3,299.3 405.0,300.0 406.7,300.7 408.3,302.5 410.0,303.0 411.7,303.8 413.3,304.0 415.0,305.0 416.7,303.5 418.3,303.3 420.0,302.0 421.7,301.4 423.3,301.6 425.0,302.0 426.5,300.8 428.0,300.0 429.5,298.4 431.0,297.0 433.0,298.7 435.0,301.0 436.7,302.9 438.3,303.3 440.0,305.0 441.7,306.3 443.3,308.7 445.0,311.0 447.0,312.9 449.0,315.0 451.0,312.0 453.0,310.9 455.0,311.0 456.7,308.9 458.3,307.5 460.0,306.0 461.7,306.4 463.3,306.2 465.0,307.0 466.7,307.5 468.3,308.9 470.0,309.0 471.7,308.3 473.3,306.6 475.0,305.0 477.0,306.0 478.5,308.8 480.0,311.0 482.0,315.0 484.0,315.6 486.0,316.0 488.0,317.5 490.0,320.0 491.7,320.3 493.3,321.3 495.0,323.0 496.5,324.6 498.0,325.0 500.0,318.0 501.7,318.3 503.3,318.6 505.0,318.0 506.7,317.0 508.3,317.5 510.0,317.0 511.7,315.3 513.3,314.0 515.0,312.0 516.7,312.1 518.3,313.4 520.0,313.0 522.0,314.4 524.0,317.0 526.0,318.6 528.0,320.0 530.0,323.8 532.0,327.0 533.7,328.9 535.3,330.0 537.0,331.0 538.7,331.6 540.3,332.1 542.0,332.0 543.7,332.6 545.3,331.8 547.0,332.0 548.5,333.8 550.0,335.0 551.5,331.6 553.0,327.0 555.0,325.5 557.0,323.0 558.5,323.9 560.0,325.0 561.7,326.4 563.3,327.5 565.0,328.0 566.7,329.4 568.3,330.8 570.0,332.0 571.7,332.8 573.3,334.1 575.0,335.0 576.7,333.8 578.3,331.7 580.0,331.0 581.7,332.5 583.3,334.4 585.0,335.0 586.7,336.2 588.3,336.7 590.0,337.0 591.7,336.8 593.3,337.3 595.0,337.0 596.7,336.4 598.3,335.6 600.0,335.0 601.7,337.5 603.3,338.4 605.0,341.0 606.7,342.4 608.3,342.3 610.0,344.0 611.7,345.5 613.3,346.6 615.0,348.0 616.7,347.0 618.3,346.9 620.0,346.0 621.7,345.3 623.3,344.8 625.0,344.0 626.7,342.3 628.3,339.0 630.0,337.0 631.7,338.0 633.3,340.1 635.0,342.0 636.7,343.9 638.3,344.9 640.0,347.0 641.7,347.9 643.3,350.2 645.0,351.0 646.7,352.2 648.3,352.9 650.0,354.0 651.7,355.5 653.3,355.8 655.0,357.0 656.7,358.6 658.3,359.2 660.0,361.0 661.7,359.9 663.3,359.4 665.0,358.0 666.7,358.2 668.3,357.9 670.0,357.0 671.7,355.2 673.3,353.8 675.0,352.0 676.5,350.7 678.0,350.0 680.0,344.0 681.5,343.0 683.0,343.0 684.5,347.0 686.0,351.0 688.0,353.5 690.0,355.0 691.7,358.5 693.3,361.3 695.0,364.0 696.5,367.1 698.0,369.0 700.0,368.2 702.0,368.0 703.7,366.2 705.3,365.3 707.0,364.0 708.7,363.0 710.3,362.3 712.0,362.0 713.7,361.5 715.3,361.5 717.0,361.0 718.7,362.0 720.3,362.7 722.0,364.0 724.0,363.0 726.0,361.0 728.0,360.2 730.0,358.0 731.7,361.3 733.3,364.1 735.0,368.0 736.7,366.0 738.3,365.9 740.0,364.0 741.7,364.0 743.3,365.6 745.0,366.0 746.7,365.4 748.3,364.4 750.0,364.0 751.7,362.4 753.3,359.3 755.0,358.0 756.7,357.8 758.3,358.6 760.0,359.0 761.7,360.0 763.3,362.8 765,364" fill="none" stroke="#6b8e23" stroke-width="2"/>
  <polyline points="61.0,318.0 63.0,317.7 65.0,318.0 67.0,316.6 69.0,316.0 71.0,317.5 73.0,320.0 75.0,324.0 76.5,329.2 78.0,334.0 80.0,334.4 82.0,335.0 84.0,336.7 86.0,338.0 88.0,341.2 90.0,344.0 92.0,342.4 94.0,340.0 95.5,339.6 97.0,338.0 99.0,329.0 101.0,328.7 103.0,328.0 104.7,325.6 106.3,324.0 108.0,322.0 110.0,322.6 112.0,324.0 113.5,325.4 115.0,328.0 116.5,330.3 118.0,332.0 119.5,332.9 121.0,334.2 122.5,335.6 124.0,337.0 125.5,339.2 127.0,341.0 128.5,345.0 130.0,349.0 131.7,347.1 133.3,345.3 135.0,343.0 136.7,342.9 138.3,343.4 140.0,343.0 141.7,341.8 143.3,339.2 145.0,338.0 146.7,335.9 148.3,332.9 150.0,330.0 151.5,325.6 153.0,322.0 154.7,321.9 156.3,322.2 158.0,322.0 160.0,321.0 161.7,321.8 163.3,321.5 165.0,322.0 166.7,322.4 168.3,323.1 170.0,323.0 171.7,322.7 173.3,322.2 175.0,321.0 176.5,325.5 178.0,330.0 180.0,330.0 181.7,329.5 183.3,328.3 185.0,328.0 186.7,325.9 188.3,323.7 190.0,321.0 191.7,322.5 193.3,323.9 195.0,325.0 196.7,323.0 198.3,322.1 200.0,320.0 201.7,321.6 203.3,322.6 205.0,323.0 206.7,323.7 208.3,324.7 210.0,325.0 211.6,324.4 213.2,324.7 214.8,324.2 216.4,323.2 218.0,323.0 219.8,322.5 221.5,322.9 223.2,323.1 225.0,323.0 226.5,325.3 228.0,327.0 229.8,328.0 231.5,328.4 233.2,330.4 235.0,331.0 236.6,330.9 238.2,332.2 239.8,331.8 241.4,332.4 243.0,333.0 244.8,335.1 246.5,336.1 248.2,337.8 250.0,340.0 251.0,342.0 253.0,333.0 254.7,332.0 256.3,331.3 258.0,330.0 260.0,326.0 261.7,325.1 263.3,323.6 265.0,322.0 266.7,321.2 268.3,319.3 270.0,318.0 271.7,319.2 273.3,318.8 275.0,320.0 276.7,324.0 278.3,328.7 280.0,333.0 281.7,334.1 283.3,335.9 285.0,337.0 286.7,338.2 288.3,339.0 290.0,340.0 291.7,340.4 293.3,340.1 295.0,340.0 296.7,338.1 298.3,336.5 300.0,335.0 302.0,322.0 303.7,321.7 305.3,321.1 307.0,320.0 308.5,318.4 310.0,317.9 311.5,316.8 313.0,315.0 314.7,315.4 316.3,315.8 318.0,316.0 319.7,316.3 321.3,317.4 323.0,318.0 324.7,319.3 326.3,320.8 328.0,322.0 329.5,326.9 331.0,333.0 333.0,333.6 335.0,333.0 336.5,331.5 338.0,330.0 339.7,328.9 341.3,328.4 343.0,327.0 344.7,325.1 346.3,323.0 348.0,321.0 350.0,314.2 352.0,307.0 353.5,304.5 355.0,303.0 356.7,304.0 358.3,304.9 360.0,306.0 361.7,307.9 363.3,309.2 365.0,310.0 366.7,310.4 368.3,311.3 370.0,312.0 371.7,311.9 373.3,312.6 375.0,313.0 376.7,315.7 378.3,318.1 380.0,320.0 381.7,319.3 383.3,318.4 385.0,318.0 386.7,316.0 388.3,314.8 390.0,313.0 391.7,312.8 393.3,311.2 395.0,311.0 396.7,311.7 398.3,311.1 400.0,312.0 401.5,308.1 403.0,305.0 404.7,305.7 406.3,307.2 408.0,308.0 409.7,308.8 411.3,309.8 413.0,311.0 414.7,310.1 416.3,308.5 418.0,308.0 419.7,307.3 421.3,305.5 423.0,305.0 424.7,304.3 426.3,303.4 428.0,303.0 430.0,306.1 432.0,310.0 433.5,311.0 435.0,312.0 436.7,312.3 438.3,312.5 440.0,313.0 441.7,313.6 443.3,314.4 445.0,315.0 446.7,315.6 448.3,316.6 450.0,318.0 452.0,316.0 453.0,307.0 455.0,304.7 457.0,302.0 458.5,299.7 460.0,297.0 461.5,298.0 463.0,299.0 464.5,297.9 466.0,296.0 468.0,295.6 470.0,295.0 471.5,292.9 473.0,290.0 475.0,287.0 477.0,288.0 479.0,297.7 481.0,308.0 482.7,308.3 484.3,308.4 486.0,308.0 487.7,309.1 489.3,309.1 491.0,310.0 492.7,310.1 494.3,311.2 496.0,311.0 498.0,307.7 500.0,305.0 501.5,301.1 503.0,296.0 505.0,294.0 507.0,291.0 509.0,287.6 511.0,285.0 512.5,280.7 514.0,277.0 516.0,276.8 518.0,276.0 519.7,276.0 521.3,276.2 523.0,277.0 525.0,278.4 527.0,279.0 528.5,289.4 530.0,300.0 531.5,302.8 533.0,305.0 535.0,301.1 537.0,298.0 539.0,296.4 541.0,295.0 542.7,294.6 544.3,293.1 546.0,293.0 547.7,291.0 549.3,289.9 551.0,288.0 553.0,286.0 555.0,276.0 556.7,276.2 558.3,275.9 560.0,275.0 561.7,274.9 563.3,275.7 565.0,276.0 566.7,276.0 568.3,275.3 570.0,275.0 571.7,275.9 573.3,276.0 575.0,277.0 576.5,283.0 578.0,290.0 580.0,285.0 581.5,288.0 583.0,292.0 584.7,290.8 586.3,290.7 588.0,290.0 589.7,288.4 591.3,286.7 593.0,285.0 594.7,282.6 596.3,280.6 598.0,279.0 599.7,279.6 601.3,281.4 603.0,282.0 604.7,280.3 606.3,277.8 608.0,275.0 609.7,274.2 611.3,273.8 613.0,274.0 614.7,273.5 616.3,272.0 618.0,271.0 620.0,266.8 622.0,262.0 624.0,259.3 626.0,257.0 628.0,270.0 629.5,277.5 631.0,285.0 633.0,277.0 635.0,269.0 636.7,268.9 638.3,269.1 640.0,269.0 641.7,268.7 643.3,269.9 645.0,270.0 646.7,270.7 648.3,270.3 650.0,271.0 651.7,269.3 653.3,268.0 655.0,266.0 656.7,264.2 658.3,262.3 660.0,261.0 661.7,259.3 663.3,258.3 665.0,257.0 666.7,255.1 668.3,254.8 670.0,253.0 671.7,250.4 673.3,247.2 675.0,244.0 677.0,239.0 679.0,264.0 680.5,256.4 682.0,248.0 684.0,264.0 686.0,264.7 688.0,265.0 690.0,266.4 692.0,268.0 693.7,268.5 695.3,268.7 697.0,269.0 698.5,270.6 700.0,271.0 702.0,267.9 704.0,264.0 706.0,258.2 708.0,253.0 710.0,251.5 712.0,249.0 714.0,246.8 716.0,244.0 718.0,242.3 720.0,240.0 721.7,240.0 723.3,239.2 725.0,239.0 726.5,241.0 728.0,242.0 729.5,249.5 731.0,256.0 732.5,252.2 734.0,248.0 735.5,256.8 737.0,265.0 738.7,265.0 740.3,264.2 742.0,264.0 743.5,263.5 745.0,262.0 746.5,261.6 748.0,261.0 749.5,260.5 751.0,260.0 753.0,248.0 754.5,245.9 756.0,245.0 758.0,244.8 760.0,245.0 761.7,245.5 763.3,245.8 765,246" fill="none" stroke="#7cfc00" stroke-width="2"/>
  <line x1="127" y1="259" x2="127" y2="299" stroke="#6b8e23" stroke-width="2"/><line x1="177" y1="268" x2="177" y2="298" stroke="#6b8e23" stroke-width="2"/><line x1="227" y1="168" x2="227" y2="312" stroke="#6b8e23" stroke-width="2"/><line x1="277" y1="163" x2="277" y2="300" stroke="#6b8e23" stroke-width="2"/><line x1="329" y1="272" x2="329" y2="300" stroke="#6b8e23" stroke-width="2"/><line x1="376" y1="190" x2="376" y2="330" stroke="#6b8e23" stroke-width="2"/><line x1="426" y1="192" x2="426" y2="330" stroke="#6b8e23" stroke-width="2"/><line x1="527" y1="213" x2="527" y2="351" stroke="#6b8e23" stroke-width="2"/><line x1="577" y1="233" x2="577" y2="367" stroke="#6b8e23" stroke-width="2"/><line x1="627" y1="241" x2="627" y2="374" stroke="#6b8e23" stroke-width="2"/><line x1="678" y1="238" x2="678" y2="380" stroke="#6b8e23" stroke-width="2"/><line x1="727" y1="348" x2="727" y2="368" stroke="#6b8e23" stroke-width="2"/><line x1="76" y1="211" x2="76" y2="358" stroke="#7cfc00" stroke-width="2"/><line x1="127" y1="321" x2="127" y2="361" stroke="#7cfc00" stroke-width="2"/><line x1="178" y1="300" x2="178" y2="344" stroke="#7cfc00" stroke-width="2"/><line x1="228" y1="320" x2="228" y2="343" stroke="#7cfc00" stroke-width="2"/><line x1="278" y1="232" x2="278" y2="380" stroke="#7cfc00" stroke-width="2"/><line x1="329" y1="224" x2="329" y2="375" stroke="#7cfc00" stroke-width="2"/><line x1="378" y1="208" x2="378" y2="356" stroke="#7cfc00" stroke-width="2"/><line x1="429" y1="205" x2="429" y2="350" stroke="#7cfc00" stroke-width="2"/><line x1="479" y1="285" x2="479" y2="312" stroke="#7cfc00" stroke-width="2"/><line x1="530" y1="290" x2="530" y2="312" stroke="#7cfc00" stroke-width="2"/><line x1="578" y1="280" x2="578" y2="305" stroke="#7cfc00" stroke-width="2"/><line x1="631" y1="168" x2="631" y2="310" stroke="#7cfc00" stroke-width="2"/><line x1="682" y1="244" x2="682" y2="266" stroke="#7cfc00" stroke-width="2"/><line x1="734" y1="244" x2="734" y2="266" stroke="#7cfc00" stroke-width="2"/><line x1="130.5" y1="283.8" x2="130.5" y2="295.4" stroke="#6b8e23" stroke-width="1"/><line x1="180.5" y1="291.3" x2="180.5" y2="301.0" stroke="#6b8e23" stroke-width="1"/><line x1="230.5" y1="279.0" x2="230.5" y2="290.0" stroke="#6b8e23" stroke-width="1"/><line x1="280.5" y1="281.9" x2="280.5" y2="291.3" stroke="#6b8e23" stroke-width="1"/><line x1="332.5" y1="294.3" x2="332.5" y2="307.1" stroke="#6b8e23" stroke-width="1"/><line x1="379.5" y1="299.4" x2="379.5" y2="311.7" stroke="#6b8e23" stroke-width="1"/><line x1="429.5" y1="294.0" x2="429.5" y2="303.1" stroke="#6b8e23" stroke-width="1"/><line x1="530.5" y1="320.3" x2="530.5" y2="332.2" stroke="#6b8e23" stroke-width="1"/><line x1="580.5" y1="329.0" x2="580.5" y2="337.4" stroke="#6b8e23" stroke-width="1"/><line x1="630.5" y1="335.8" x2="630.5" y2="342.2" stroke="#6b8e23" stroke-width="1"/><line x1="681.5" y1="340.8" x2="681.5" y2="347.9" stroke="#6b8e23" stroke-width="1"/><line x1="730.5" y1="356.0" x2="730.5" y2="367.4" stroke="#6b8e23" stroke-width="1"/><line x1="79.5" y1="331.0" x2="79.5" y2="341.2" stroke="#7cfc00" stroke-width="1"/><line x1="130.5" y1="344.1" x2="130.5" y2="356.4" stroke="#7cfc00" stroke-width="1"/><line x1="181.5" y1="324.7" x2="181.5" y2="337.5" stroke="#7cfc00" stroke-width="1"/><line x1="231.5" y1="324.0" x2="231.5" y2="332.7" stroke="#7cfc00" stroke-width="1"/><line x1="281.5" y1="330.3" x2="281.5" y2="342.2" stroke="#7cfc00" stroke-width="1"/><line x1="332.5" y1="332.1" x2="332.5" y2="342.9" stroke="#7cfc00" stroke-width="1"/><line x1="381.5" y1="317.9" x2="381.5" y2="326.4" stroke="#7cfc00" stroke-width="1"/><line x1="432.5" y1="308.3" x2="432.5" y2="317.0" stroke="#7cfc00" stroke-width="1"/><line x1="482.5" y1="304.7" x2="482.5" y2="312.5" stroke="#7cfc00" stroke-width="1"/><line x1="533.5" y1="300.2" x2="533.5" y2="311.5" stroke="#7cfc00" stroke-width="1"/><line x1="581.5" y1="283.9" x2="581.5" y2="294.6" stroke="#7cfc00" stroke-width="1"/><line x1="634.5" y1="270.5" x2="634.5" y2="278.7" stroke="#7cfc00" stroke-width="1"/><line x1="685.5" y1="260.7" x2="685.5" y2="271.7" stroke="#7cfc00" stroke-width="1"/><line x1="737.5" y1="262.9" x2="737.5" y2="273.3" stroke="#7cfc00" stroke-width="1"/>
  <!-- cursors -->
  <line x1="194" y1="138" x2="194" y2="454" stroke="#720000" stroke-width="1.8"/>
  <line x1="209" y1="138" x2="209" y2="454" stroke="#720000" stroke-width="1.8"/>
  <line x1="62" y1="201.5" x2="765" y2="201.5" stroke="#a80000" stroke-width="1.1"/>
  <line x1="62" y1="331.5" x2="765" y2="331.5" stroke="#a80000" stroke-width="1.1"/>
  <line x1="742.5" y1="202" x2="742.5" y2="331" stroke="#b00000" stroke-width="1.1" stroke-dasharray="2,1.6"/>
  <path d="M193.8,199.2 L196.1,201.5 L193.8,203.8 L191.5,201.5 Z" fill="none" stroke="#c00000" stroke-width="1.1"/>
  <g font-size="7.5" fill="#101010" stroke="#101010" stroke-width="0.15">
    <rect x="196" y="191" width="55" height="8" fill="#fffbd6"/>
    <text x="197" y="197.6" textLength="53" lengthAdjust="spacingAndGlyphs">X=7441 Y=52520664</text>
    <rect x="208" y="191" width="2" height="8" fill="#c00000" opacity="0.3" stroke="none"/>
    <rect x="211" y="321" width="59" height="8" fill="#fffbd6"/>
    <text x="212" y="327.6" textLength="57" lengthAdjust="spacingAndGlyphs">X=7521 Y=-16207167</text>
    <rect x="185" y="454" width="32" height="8" fill="#fffbd6"/>
    <text x="186" y="460.6" textLength="30" lengthAdjust="spacingAndGlyphs">&#8710;X = 79.98</text>
    <rect x="721" y="266" width="42" height="8" fill="#fffbd6"/>
    <text x="722" y="272.6" textLength="40" lengthAdjust="spacingAndGlyphs">&#8710;Y = 68727832</text>
  </g>
</svg>

<!-- right side controls -->
<svg class="abs" style="left:0;top:0" width="1000" height="542" font-family="Liberation Sans">
  <!-- vertical sliders -->
  <line x1="793.5" y1="116" x2="793.5" y2="167" stroke="#b4b8ba"/><rect x="792.5" y="115.5" width="3" height="1.2" fill="#707070"/>
  <line x1="793.5" y1="199" x2="793.5" y2="250" stroke="#b4b8ba"/>
  <line x1="793.5" y1="358" x2="793.5" y2="410" stroke="#b4b8ba"/><rect x="792.5" y="357.5" width="3" height="1.2" fill="#707070"/>
  <line x1="793.5" y1="441" x2="793.5" y2="493" stroke="#b4b8ba"/>
  <defs>
    <linearGradient id="thg" x1="0" y1="0" x2="0" y2="1"><stop offset="0" stop-color="#f4f4f4"/><stop offset="1" stop-color="#d4d4d4"/></linearGradient>
    <linearGradient id="thh" x1="0" y1="0" x2="1" y2="0"><stop offset="0" stop-color="#f4f4f4"/><stop offset="1" stop-color="#d4d4d4"/></linearGradient>
  </defs>
  <g fill="url(#thg)" stroke="#8c8c8c" stroke-width="1">
    <path d="M789.5,167.5 H798.5 L801.5,170.5 L798.5,174.5 H789.5 Q788.5,174.5 788.5,173.5 V168.5 Q788.5,167.5 789.5,167.5 Z"/>
    <path d="M789.5,191.5 H798.5 L801.5,195 L798.5,198.5 H789.5 Q788.5,198.5 788.5,197.5 V192.5 Q788.5,191.5 789.5,191.5 Z"/>
    <path d="M789.5,409.5 H798.5 L801.5,413 L798.5,416.5 H789.5 Q788.5,416.5 788.5,415.5 V410.5 Q788.5,409.5 789.5,409.5 Z"/>
    <path d="M789.5,434.5 H798.5 L801.5,438 L798.5,441.5 H789.5 Q788.5,441.5 788.5,440.5 V435.5 Q788.5,434.5 789.5,434.5 Z"/>
  </g>
  <!-- C / A -->
  <rect x="787.5" y="284.5" width="16" height="17" fill="#fff" stroke="#8592a2"/>
  <rect x="787.5" y="307.5" width="16" height="17" fill="#fff" stroke="#8592a2"/>
  <text x="795.5" y="295.5" font-size="9" fill="#3e4a5a" stroke="#3e4a5a" stroke-width="0.25" text-anchor="middle">C</text>
  <text x="795.5" y="318.3" font-size="9" fill="#3e4a5a" stroke="#3e4a5a" stroke-width="0.25" text-anchor="middle">A</text>
  <!-- horizontal slider -->
  <rect x="561" y="511" width="214" height="2" fill="#d6dada"/>
  <path d="M622.5,507.5 H628.5 Q629.5,507.5 629.5,508.5 V517 L625.5,520.5 L621.5,517 V508.5 Q621.5,507.5 622.5,507.5 Z" fill="url(#thh)" stroke="#8c8c8c"/>
</svg>

<!-- buttons -->
<div class="btn" style="left:825px;top:26px;width:79px;height:42px;"></div>
<div class="btn" style="left:908px;top:26px;width:79px;height:42px;"></div>
<div class="btn" style="left:825px;top:299px;width:79px;height:41px;"></div>
<div class="btn" style="left:908px;top:299px;width:79px;height:41px;"></div>
<!-- list -->
<div class="abs" style="left:825px;top:72px;width:162px;height:223px;box-sizing:border-box;border:1px solid #8f9aa8;background:#fff;"></div>
<div class="abs" style="left:826px;top:73px;width:160px;height:17px;background:linear-gradient(#fdfdfe 0%,#fbfcfd 35%,#eff1f4 45%,#eceff3 100%);border-bottom:1px solid #dadee4;"></div>
<svg class="abs" style="left:0;top:0" width="1000" height="542" font-family="Liberation Sans">
  <g stroke="#ececec" stroke-width="1">
    <line x1="826" y1="110.5" x2="986" y2="110.5"/>
    <line x1="826" y1="130.5" x2="986" y2="130.5"/>
    <line x1="826" y1="149.5" x2="986" y2="149.5"/>
    <line x1="826" y1="169.5" x2="986" y2="169.5"/>
    <line x1="826" y1="189.5" x2="986" y2="189.5"/>
    <line x1="826" y1="209.5" x2="986" y2="209.5"/>
    <line x1="826" y1="229.5" x2="986" y2="229.5"/>
    <line x1="826" y1="249.5" x2="986" y2="249.5"/>
    <line x1="826" y1="268.5" x2="986" y2="268.5"/>
    <line x1="826" y1="288.5" x2="986" y2="288.5"/>
    <line x1="841.5" y1="73" x2="841.5" y2="294"/>
    <line x1="963.5" y1="73" x2="963.5" y2="294"/>
    <line x1="981.5" y1="73" x2="981.5" y2="91"/>
  </g>
  <text x="902" y="85.8" font-size="9.5" fill="#2e3440" text-anchor="middle" textLength="28" lengthAdjust="spacingAndGlyphs">Source</text>
  <text x="901.5" y="105" font-size="10.5" fill="#ff1e1e" text-anchor="middle" textLength="43.5" lengthAdjust="spacingAndGlyphs">F.Speed_1</text>
  <text x="901.5" y="125" font-size="10.5" fill="#ff9a2a" text-anchor="middle" textLength="43.5" lengthAdjust="spacingAndGlyphs">F.Speed_3</text>
  <text x="901.5" y="144" font-size="10.5" fill="#6b8e23" text-anchor="middle" textLength="38.5" lengthAdjust="spacingAndGlyphs">Torque_1</text>
  <text x="901.5" y="164" font-size="10.5" fill="#7cfc00" text-anchor="middle" textLength="38.5" lengthAdjust="spacingAndGlyphs">Torque_3</text>
  <g>
    <rect x="829.5" y="96.5" width="9" height="9" fill="#eceef2" stroke="#8d99a8"/>
    <rect x="829.5" y="116.5" width="9" height="9" fill="#eceef2" stroke="#8d99a8"/>
    <rect x="829.5" y="135.5" width="9" height="9" fill="#eceef2" stroke="#8d99a8"/>
    <rect x="829.5" y="155.5" width="9" height="9" fill="#eceef2" stroke="#8d99a8"/>
    <path d="M831.5,100.5 L833.5,104 L837,97.5 M831.5,120.5 L833.5,124 L837,117.5 M831.5,139.5 L833.5,143 L837,136.5 M831.5,159.5 L833.5,163 L837,156.5" fill="none" stroke="#2a3f9a" stroke-width="1.3"/>
  </g>
  <!-- calendar icon -->
  <g fill="none" stroke="#2a2a2a" stroke-width="1.3">
    <path d="M855,37.5 H871 Q873,37.5 873,39.5 V49 M866,55.5 H855 Q853,55.5 853,53.5 V39.5 Q853,37.5 855,37.5"/>
    <line x1="853" y1="41.8" x2="873" y2="41.8"/>
    <line x1="858" y1="35" x2="858" y2="40"/>
    <line x1="868.5" y1="35" x2="868.5" y2="40"/>
    <circle cx="870.5" cy="52.5" r="5"/>
    <path d="M870.5,49.8 V55.2 M867.8,52.5 H873.2"/>
  </g>
  <!-- gear refresh icon (top) -->
  <g fill="none" stroke="#3a3a3a" stroke-width="1.2">
    <circle cx="947.7" cy="47" r="2.6"/>
    <path d="M946.3,40 h2.8 l0.5,1.8 l1.6,0.9 l1.8,-0.6 l1.4,2.4 l-1.3,1.3 v1.9 l1.3,1.3 l-1.4,2.4 l-1.8,-0.6 l-1.6,0.9 l-0.5,1.8 h-2.8 l-0.5,-1.8 l-1.6,-0.9 l-1.8,0.6 l-1.4,-2.4 l1.3,-1.3 v-1.9 l-1.3,-1.3 l1.4,-2.4 l1.8,0.6 l1.6,-0.9 z"/>
  </g>
  <g fill="none" stroke="#4a9ad6" stroke-width="1.2">
    <path d="M937.2,46.5 A10.5,10.5 0 0 1 946.5,36.4"/>
    <path d="M958.2,47.5 A10.5,10.5 0 0 1 948.9,57.6"/>
  </g>
  <path d="M946,34.2 L949,36.2 L946,38.4 Z" fill="#4a9ad6"/>
  <path d="M949.5,55.4 L946.5,57.6 L949.5,59.8 Z" fill="#4a9ad6"/>
  <!-- gear with refresh (bottom-left) -->
  <g fill="none" stroke="#2a2a2a" stroke-width="1.2" stroke-linejoin="round">
    <path d="M868.50,319.30 L871.62,318.16 L871.49,317.46 L873.84,315.54 L871.93,312.23 L869.09,313.30 L865.90,311.46 L865.41,308.47 L861.59,308.47 L861.10,311.46 L857.91,313.30 L855.07,312.23 L853.16,315.54 L855.51,317.46 L855.51,321.14 L853.16,323.06 L855.07,326.37 L857.91,325.30 L861.10,327.14 L861.59,330.13 L864.65,330.24 L864.02,324.27 A5.0,5.0 0 1 1 868.50,319.30 Z"/>
    <path d="M871,331.3 A5,5 0 1 1 874.6,323.3"/>
  </g>
  <path d="M876.8,321.8 L876.8,326.3 L872.6,325.6 Z" fill="#2a2a2a"/>
  <!-- eraser -->
  <g fill="none" stroke="#2a2a2a" stroke-width="1.25" stroke-linejoin="round" transform="translate(948.5,319.8) scale(0.95) translate(-948.5,-319.8)">
    <path d="M937.5,323 L951,309.5 Q953,307.5 955,309.5 L959.5,314 Q961.5,316 959.5,318 L946,331.5 H940.5 L937.5,328.5 Q935.5,326 937.5,323 Z"/>
    <line x1="942.5" y1="318" x2="950.5" y2="326"/>
    <line x1="946" y1="331.5" x2="955" y2="331.5"/>
  </g>
</svg>
<!-- start button -->
<div class="abs" style="left:825px;top:483px;width:162px;height:41px;box-sizing:border-box;border:1px solid #24405e;background:#4682b4;"></div>
<svg class="abs" style="left:0;top:0" width="1000" height="542"><text x="894" y="506.8" font-family="Liberation Sans" font-weight="bold" font-size="10.8" fill="#fff" textLength="22.6" lengthAdjust="spacingAndGlyphs">Start</text></svg>
</body></html>
